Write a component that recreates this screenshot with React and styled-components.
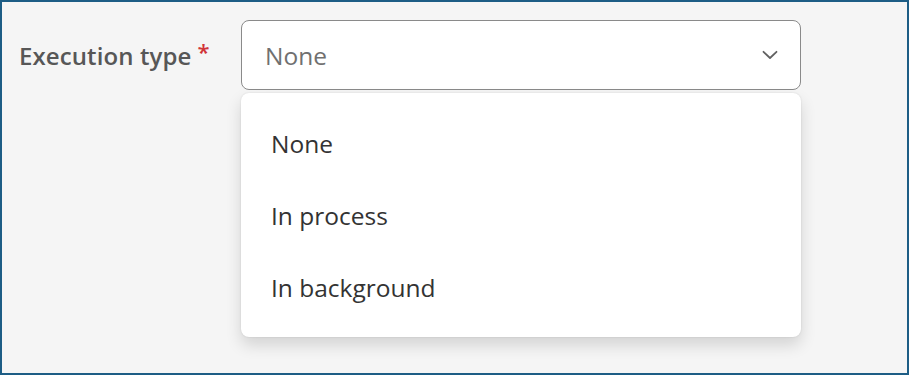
import React, { useState } from "react";
import styled, { createGlobalStyle } from "styled-components";

const GlobalStyle = createGlobalStyle`
  html, body {
    margin: 0;
    padding: 0;
    background: #f5f5f5;
  }
  * {
    box-sizing: border-box;
  }
`;

const options = ["None", "In process", "In background"];

function App() {
  const [value, setValue] = useState("");
  const [open, setOpen] = useState(true);

  const pick = (opt) => {
    setValue(opt);
    setOpen(false);
  };

  return (
    <Frame>
      <GlobalStyle />
      <Row>
        <Label>
          Execution type <Required>*</Required>
        </Label>
        <Field>
          <Select type="button" onClick={() => setOpen(!open)}>
            <SelectText $placeholder={!value}>{value || "None"}</SelectText>
            <Chevron width="16" height="10" viewBox="0 0 16 10">
              <path
                d="M1.5 1.8 L8 8 L14.5 1.8"
                fill="none"
                stroke="#616161"
                strokeWidth="1.8"
                strokeLinecap="round"
                strokeLinejoin="round"
              />
            </Chevron>
          </Select>
          {open && (
            <Menu>
              {options.map((opt) => (
                <Option key={opt} onClick={() => pick(opt)}>
                  {opt}
                </Option>
              ))}
            </Menu>
          )}
        </Field>
      </Row>
    </Frame>
  );
}

const Frame = styled.div`
  height: 375px;
  width: 909px;
  border: 2px solid #1d5d85;
  background: #f5f5f5;
  font-family: "Open Sans", "Noto Sans", sans-serif;
`;

const Row = styled.div`
  display: flex;
  align-items: flex-start;
  padding: 18px 0 0 17px;
`;

const Label = styled.div`
  width: 222px;
  height: 70px;
  display: flex;
  align-items: center;
  font-size: 24px;
  font-weight: 600;
  color: #575757;
  letter-spacing: 0.1px;
`;

const Required = styled.span`
  color: #d13438;
  margin-left: 6px;
  font-size: 22px;
  position: relative;
  top: -4px;
`;

const Field = styled.div`
  position: relative;
  width: 560px;
`;

const Select = styled.button`
  width: 560px;
  height: 70px;
  display: flex;
  align-items: center;
  justify-content: space-between;
  padding: 0 22px 0 23px;
  background: #ffffff;
  border: 1px solid #8a8a8a;
  border-radius: 8px;
  font-family: inherit;
  cursor: pointer;
`;

const SelectText = styled.span`
  font-size: 24.5px;
  color: ${(props) => (props.$placeholder ? "#707070" : "#242424")};
`;

const Chevron = styled.svg`
  display: block;
`;

const Menu = styled.div`
  position: absolute;
  top: 73px;
  left: 0;
  width: 560px;
  padding: 14px 0 14px;
  background: #ffffff;
  border-radius: 8px;
  box-shadow: 0 8px 16px rgba(0, 0, 0, 0.14), 0 0 2px rgba(0, 0, 0, 0.12);
`;

const Option = styled.div`
  height: 72px;
  display: flex;
  align-items: center;
  padding-left: 30px;
  font-size: 24.5px;
  color: #333333;
  cursor: pointer;
`;

export default App;
